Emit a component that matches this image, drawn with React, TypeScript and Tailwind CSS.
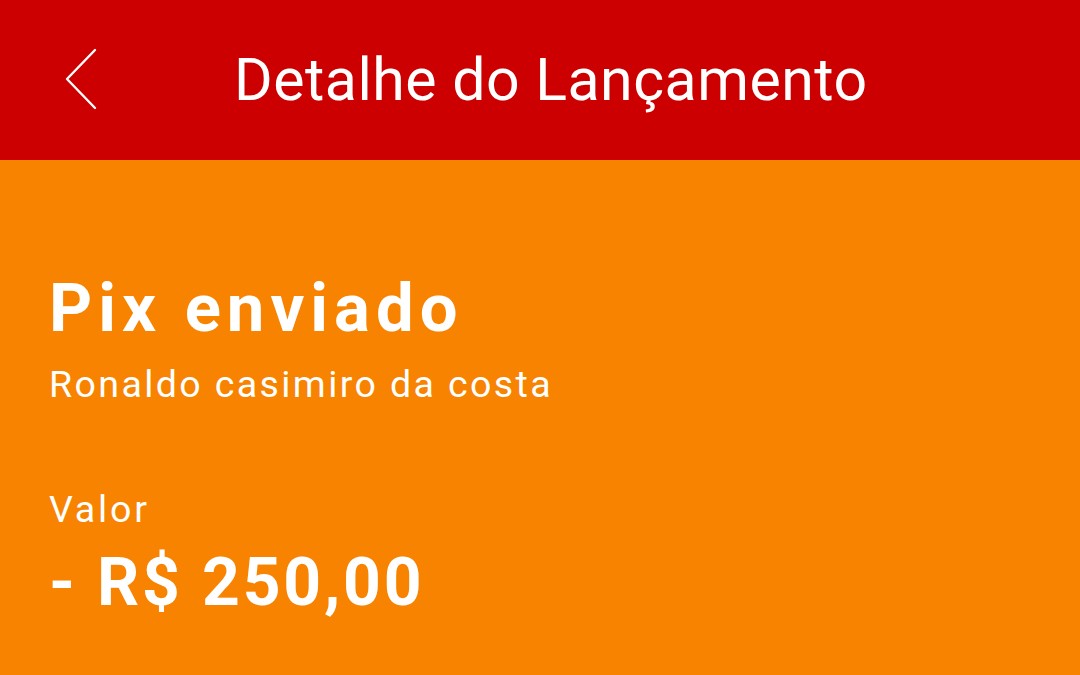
const App = () => {
  return (
    <div className="w-[1080px] h-[675px] bg-[#f78300] overflow-hidden font-['Roboto',sans-serif] text-white">
      {/* Header */}
      <div className="h-[160px] bg-[#cc0000] flex items-center">
        <button className="w-[234px] h-full flex items-center pl-[65px]">
          <svg width="34" height="64" viewBox="0 0 34 64" fill="none">
            <path
              d="M30 2 L2 31 L30 60"
              stroke="white"
              strokeWidth="2.4"
              strokeLinecap="round"
              strokeLinejoin="round"
            />
          </svg>
        </button>
        <h1 className="text-[59px] leading-none font-normal tracking-[0.5px] -mt-[2px]">
          Detalhe do Lançamento
        </h1>
      </div>

      {/* Content */}
      <div className="px-[49px] pt-[115px]">
        <h2 className="text-[67px] leading-none font-bold tracking-[6px]">
          Pix enviado
        </h2>
        <p className="text-[37.5px] leading-none tracking-[2.4px] mt-[24px]">
          Ronaldo casimiro da costa
        </p>
        <p className="text-[37.5px] leading-none tracking-[2.8px] mt-[87px]">
          Valor
        </p>
        <p className="text-[66px] leading-none font-bold tracking-[2.8px] mt-[22px]">
          - R$ 250,00
        </p>
      </div>
    </div>
  );
};

export default App;
